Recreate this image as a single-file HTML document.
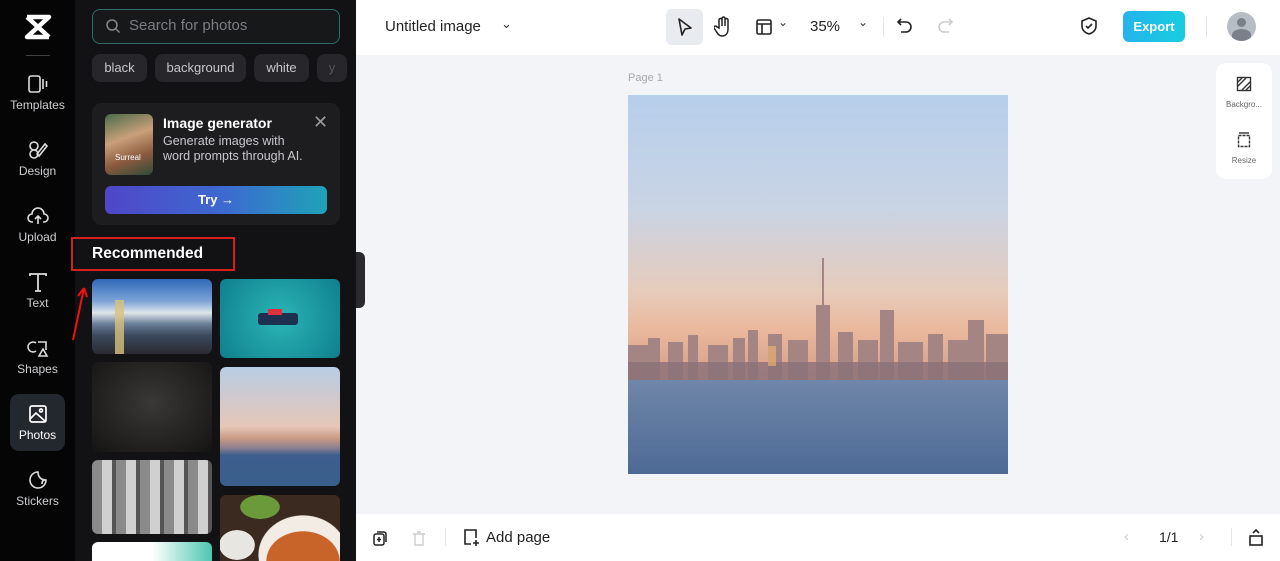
<!DOCTYPE html>
<html><head><meta charset="utf-8"><style>
*{box-sizing:border-box;margin:0;padding:0}
html,body{width:1280px;height:561px;overflow:hidden}
body{font-family:"Liberation Sans",sans-serif;background:#f2f4f7;position:relative}
.abs{position:absolute}
#rail{left:0;top:0;width:75px;height:561px;background:#050505}
#panel{left:75px;top:0;width:281px;height:561px;background:#121214}
.ri{position:absolute;left:0;width:75px;text-align:center;color:#cfcfd3;font-size:12px}
.ri svg{display:block;margin:0 auto 4px}
.chip{position:absolute;top:54px;height:28px;border-radius:8px;background:#27272b;color:#c8c8cc;font-size:13px;line-height:28px;text-align:center}
.th{position:absolute;border-radius:6px;overflow:hidden}
#top{left:356px;top:0;width:924px;height:55px;background:#fff}
#bot{left:356px;top:514px;width:924px;height:47px;background:#fff}
</style></head><body>
<div id="rail" class="abs">
 <svg class="abs" style="left:24px;top:14px" width="28" height="26" viewBox="0 0 28 26"><path d="M3 3h22L3 23h22M3 3l22 20" stroke="#fff" stroke-width="4.5" fill="none" stroke-linejoin="round"/></svg>
 <div class="abs" style="left:26px;top:55px;width:24px;height:1px;background:#444"></div>
 <div class="ri" style="top:74px"><svg width="22" height="20" viewBox="0 0 22 20" fill="none" stroke="#ddd" stroke-width="1.6"><rect x="2" y="2" width="11" height="16" rx="2"/><path d="M16 5v10M19.5 7v6"/></svg>Templates</div>
 <div class="ri" style="top:140px"><svg width="22" height="20" viewBox="0 0 22 20" fill="none" stroke="#ddd" stroke-width="1.6"><circle cx="7" cy="6" r="4"/><circle cx="7" cy="14" r="4"/><path d="M10 14L18 4l2 2-8 10z"/></svg>Design</div>
 <div class="ri" style="top:206px"><svg width="22" height="20" viewBox="0 0 22 20" fill="none" stroke="#ddd" stroke-width="1.6"><path d="M6 16H5a4 4 0 010-8 6 6 0 0112 0 4 4 0 010 8h-1M11 18v-8M8 13l3-3 3 3"/></svg>Upload</div>
 <div class="ri" style="top:272px"><svg width="22" height="20" viewBox="0 0 22 20" fill="none" stroke="#ddd" stroke-width="1.8"><path d="M3 4V2h16v2M11 2v17M8 19h6"/></svg>Text</div>
 <div class="ri" style="top:338px"><svg width="22" height="20" viewBox="0 0 22 20" fill="none" stroke="#ddd" stroke-width="1.6"><path d="M9 5a5 5 0 100 8M11 4h8v8M12 18l4-7 4 7z"/></svg>Shapes</div>
 <div class="abs" style="left:10px;top:394px;width:55px;height:57px;border-radius:9px;background:#23272e"></div>
 <div class="ri" style="top:404px;color:#fff"><svg width="22" height="20" viewBox="0 0 22 20" fill="none" stroke="#fff" stroke-width="1.7"><rect x="3" y="2" width="16" height="16" rx="2"/><circle cx="14" cy="6.5" r="1.5"/><path d="M3 15l6-6 10 9"/></svg>Photos</div>
 <div class="ri" style="top:470px"><svg width="22" height="20" viewBox="0 0 22 20" fill="none" stroke="#ddd" stroke-width="1.6"><path d="M19 10a8 8 0 11-8-8c0 5 3 8 8 8zM19 10c-3 0-4 1-4 4"/></svg>Stickers</div>
</div>
<div id="panel" class="abs">
 <div class="abs" style="left:17px;top:9px;width:248px;height:35px;border:1px solid #2f6b6b;border-radius:8px;background:#161819"></div>
 <svg class="abs" style="left:30px;top:18px" width="16" height="16" viewBox="0 0 16 16" fill="none" stroke="#888" stroke-width="1.5"><circle cx="7" cy="7" r="5"/><path d="M11 11l3.5 3.5"/></svg>
 <div class="abs" style="left:54px;top:17px;color:#7d7d82;font-size:15px">Search for photos</div>
 <div class="chip" style="left:17px;width:55px">black</div>
 <div class="chip" style="left:80px;width:91px">background</div>
 <div class="chip" style="left:179px;width:55px">white</div>
 <div class="chip" style="left:242px;width:30px;color:#555">y</div>
 <div class="abs" style="left:17px;top:103px;width:248px;height:122px;border-radius:10px;background:#1d1d20"></div>
 <div class="th" style="left:30px;top:114px;width:48px;height:61px;background:linear-gradient(160deg,#4b6b4a,#c9a07a 40%,#8a5a3e 70%,#2f4a3a)"></div>
 <div class="abs" style="left:40px;top:153px;font-size:8px;color:#fff">Surreal</div>
 <div class="abs" style="left:88px;top:115px;color:#fff;font-size:14px;font-weight:bold">Image generator</div>
 <div class="abs" style="left:88px;top:134px;color:#c9c9cd;font-size:12.5px;line-height:15px">Generate images with<br>word prompts through AI.</div>
 <div class="abs" style="left:238px;top:112px;color:#999;font-size:18px">✕</div>
 <div class="abs" style="left:30px;top:186px;width:222px;height:28px;border-radius:6px;background:linear-gradient(90deg,#5046c8,#3c6bd0 55%,#1fa3b8);color:#fff;font-size:13px;font-weight:bold;text-align:center;line-height:28px">Try →</div>
 <div class="abs" style="left:-4px;top:237px;width:164px;height:34px;border:2px solid #d61f1f"></div>
 <div class="abs" style="left:17px;top:245px;color:#fff;font-size:15.5px;font-weight:bold">Recommended</div>
 <svg class="abs" style="left:-4px;top:282px" width="20" height="60"><path d="M2 58L13 6M13 6l-6 8M13 6l3 9" stroke="#e11" stroke-width="2" fill="none"/></svg>
 <div class="th" style="left:17px;top:279px;width:120px;height:75px;background:linear-gradient(180deg,#2f68b8,#7fa5d8 30%,#dfe5ea 45%,#6a7f98 60%,#3c4a5e 75%,#2a2a30)"></div>
 <div class="abs" style="left:40px;top:300px;width:9px;height:54px;background:#d8c27a;opacity:.8"></div>
 <div class="th" style="left:145px;top:279px;width:120px;height:79px;background:radial-gradient(circle at 50% 50%,#2bb5b5,#0f7f8e)"></div>
 <div class="abs" style="left:183px;top:313px;width:40px;height:12px;background:#1d3050;border-radius:3px"></div>
 <div class="abs" style="left:193px;top:309px;width:14px;height:6px;background:#e03040"></div>
 <div class="th" style="left:17px;top:362px;width:120px;height:90px;background:radial-gradient(ellipse at 50% 45%,#3a3835,#151414)"></div>
 <div class="th" style="left:145px;top:367px;width:120px;height:119px;background:linear-gradient(180deg,#b9cde4,#e6c7b8 50%,#c89a84 60%,#8c7f90 68%,#3d5e8e 74%,#3a5f8c)"></div>
 <div class="th" style="left:17px;top:460px;width:120px;height:74px;background:repeating-linear-gradient(90deg,#8a8a8a 0 10px,#d0d0d0 10px 20px,#555 20px 24px)"></div>
 <div class="th" style="left:145px;top:495px;width:120px;height:66px;border-radius:6px 6px 0 0;background:radial-gradient(ellipse 37px 30px at 83px 66px,#c8642a 0 98%,transparent 100%),radial-gradient(ellipse 45px 40px at 83px 60px,#f2ece4 0 98%,transparent 100%),radial-gradient(ellipse 18px 15px at 17px 50px,#e8e6e0 0 98%,transparent 100%),radial-gradient(ellipse 20px 12px at 40px 12px,#6a9a3a 0 98%,transparent 100%),#3a2a20"></div>
 <div class="th" style="left:17px;top:542px;width:120px;height:19px;border-radius:6px 6px 0 0;background:linear-gradient(90deg,#fff 50%,#4cc7b0)"></div>
</div>
<div class="abs" style="left:356px;top:252px;width:9px;height:56px;background:#2a2a2d;border-radius:0 6px 6px 0"></div>
<div id="top" class="abs">
 <div class="abs" style="left:29px;top:18px;font-size:15px;color:#222">Untitled image</div>
 <div class="abs" style="left:145px;top:16px;font-size:13px;color:#333">⌄</div>
 <div class="abs" style="left:310px;top:9px;width:37px;height:36px;border-radius:6px;background:#e8ebef"></div>
 <svg class="abs" style="left:320px;top:17px" width="18" height="20" viewBox="0 0 18 20" fill="none" stroke="#222" stroke-width="1.6" stroke-linejoin="round"><path d="M3 2l12 9-6 1-3 6z"/></svg>
 <svg class="abs" style="left:358px;top:16px" width="18" height="22" viewBox="0 0 18 22" fill="none" stroke="#222" stroke-width="1.5"><path d="M5 12V4a1.5 1.5 0 013 0v6V2.5a1.5 1.5 0 013 0V10V4a1.5 1.5 0 013 0v9c0 4-2 7-6 7-3 0-4-2-6-5l-2-3a1.5 1.5 0 012.5-1.5z"/></svg>
 <svg class="abs" style="left:400px;top:18px" width="16" height="18" viewBox="0 0 16 18" fill="none" stroke="#222" stroke-width="1.6"><rect x="1" y="2" width="14" height="14" rx="1.5"/><path d="M1 6h14M6 6v10"/></svg>
 <div class="abs" style="left:422px;top:15px;font-size:12px;color:#333">⌄</div>
 <div class="abs" style="left:454px;top:18px;font-size:15px;color:#222">35%</div>
 <div class="abs" style="left:502px;top:15px;font-size:12px;color:#333">⌄</div>
 <div class="abs" style="left:527px;top:17px;width:1px;height:20px;background:#e5e5e5"></div>
 <svg class="abs" style="left:540px;top:17px" width="18" height="18" viewBox="0 0 18 18" fill="none" stroke="#222" stroke-width="1.6"><path d="M5 2L2 5l3 3M2 5h8a5 5 0 010 10H5"/></svg>
 <svg class="abs" style="left:580px;top:17px" width="18" height="18" viewBox="0 0 18 18" fill="none" stroke="#ccc" stroke-width="1.6"><path d="M13 2l3 3-3 3M16 5H8a5 5 0 000 10h5"/></svg>
 <svg class="abs" style="left:724px;top:16px" width="18" height="20" viewBox="0 0 18 20" fill="none" stroke="#222" stroke-width="1.6"><path d="M9 2l7 3v5c0 4-3 7-7 8-4-1-7-4-7-8V5z M6 10l2 2 4-4"/></svg>
 <div class="abs" style="left:767px;top:11px;width:62px;height:31px;border-radius:6px;background:linear-gradient(90deg,#25b3ec,#18cde0);color:#fff;font-size:13px;font-weight:bold;text-align:center;line-height:31px">Export</div>
 <div class="abs" style="left:850px;top:17px;width:1px;height:20px;background:#e5e5e5"></div>
 <div class="abs" style="left:871px;top:12px;width:29px;height:29px;border-radius:50%;background:#b7bcc5;overflow:hidden"><div class="abs" style="left:10px;top:6px;width:9px;height:9px;border-radius:50%;background:#7a808a"></div><div class="abs" style="left:5px;top:17px;width:19px;height:12px;border-radius:50% 50% 0 0;background:#7a808a"></div></div>
</div>
<div class="abs" style="left:628px;top:72px;font-size:11px;color:#a5a9b0">Page 1</div>
<div class="abs" style="left:628px;top:95px;width:380px;height:379px;background:linear-gradient(180deg,#b7cfec 0%,#c9d4e4 30%,#e6cbbb 52%,#eab89c 62%,#d9a48e 72%,#c49488 100%)"></div>
<svg class="abs" style="left:628px;top:250px" width="380" height="135" viewBox="0 0 380 135"><g fill="#a48584"><rect x="0" y="95" width="20" height="35"/><rect x="20" y="88" width="12" height="42"/><rect x="40" y="92" width="15" height="38"/><rect x="60" y="85" width="10" height="45"/><rect x="80" y="95" width="20" height="35"/><rect x="105" y="88" width="12" height="42"/><rect x="120" y="80" width="10" height="50"/><rect x="140" y="84" width="14" height="46"/><rect x="160" y="90" width="20" height="40"/><rect x="188" y="55" width="14" height="75"/><rect x="194" y="8" width="2" height="50"/><rect x="210" y="82" width="15" height="48"/><rect x="230" y="90" width="20" height="40"/><rect x="252" y="60" width="14" height="70"/><rect x="270" y="92" width="25" height="38"/><rect x="300" y="84" width="15" height="46"/><rect x="320" y="90" width="20" height="40"/><rect x="340" y="70" width="16" height="60"/><rect x="358" y="84" width="22" height="46"/></g><rect x="0" y="112" width="380" height="18" fill="#8a6f78" opacity=".8"/><rect x="140" y="96" width="8" height="20" fill="#e8b070" opacity=".7"/></svg>
<div class="abs" style="left:628px;top:380px;width:380px;height:94px;background:linear-gradient(180deg,#6f86a8,#4d6a96)"></div>
<div class="abs" style="left:1216px;top:63px;width:56px;height:116px;border-radius:10px;background:#fff"></div>
<svg class="abs" style="left:1236px;top:76px" width="16" height="16" viewBox="0 0 16 16" fill="none" stroke="#333" stroke-width="1.4"><rect x="1.5" y="1.5" width="13" height="13"/><path d="M2 10l8-8M6 14l8-8M2 6l4-4M10 14l4-4"/></svg>
<div class="abs" style="left:1216px;top:100px;width:56px;text-align:center;font-size:8px;color:#666">Backgro...</div>
<svg class="abs" style="left:1236px;top:132px" width="16" height="16" viewBox="0 0 16 16" fill="none" stroke="#333" stroke-width="1.4"><rect x="2.5" y="3.5" width="11" height="11" stroke-dasharray="3 1"/><path d="M3 1h10"/></svg>
<div class="abs" style="left:1216px;top:156px;width:56px;text-align:center;font-size:8px;color:#666">Resize</div>
<div id="bot" class="abs">
 <svg class="abs" style="left:16px;top:15px" width="16" height="18" viewBox="0 0 16 18" fill="none" stroke="#222" stroke-width="1.5"><rect x="2" y="5" width="10" height="11" rx="2"/><path d="M5 3h7a2 2 0 012 2v8M7 8v5M5 10.5h4"/></svg>
 <svg class="abs" style="left:56px;top:15px" width="14" height="18" viewBox="0 0 14 18" fill="none" stroke="#ccc" stroke-width="1.4"><path d="M1 5h12M3 5v11h8V5M5 3h4"/></svg>
 <div class="abs" style="left:89px;top:14px;width:1px;height:18px;background:#e5e5e5"></div>
 <svg class="abs" style="left:106px;top:14px" width="18" height="20" viewBox="0 0 18 20" fill="none" stroke="#222" stroke-width="1.6"><path d="M9 16H3V2h11v8M14 12v6M11 15h6"/></svg>
 <div class="abs" style="left:130px;top:15px;font-size:15px;color:#222">Add page</div>
 <div class="abs" style="left:768px;top:14px;font-size:15px;color:#ccc">‹</div>
 <div class="abs" style="left:803px;top:15px;font-size:14px;color:#222">1/1</div>
 <div class="abs" style="left:843px;top:14px;font-size:15px;color:#ccc">›</div>
 <div class="abs" style="left:875px;top:14px;width:1px;height:18px;background:#e5e5e5"></div>
 <svg class="abs" style="left:892px;top:14px" width="16" height="18" viewBox="0 0 16 18" fill="none" stroke="#222" stroke-width="1.6"><rect x="2" y="8" width="12" height="9"/><path d="M5 5l3-3 3 3"/></svg>
</div>
</body></html>
